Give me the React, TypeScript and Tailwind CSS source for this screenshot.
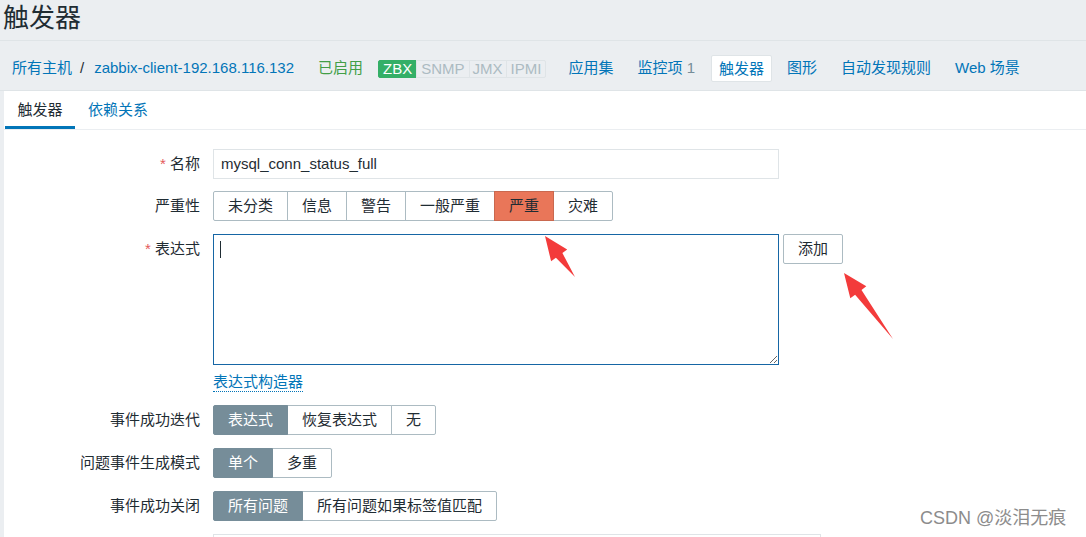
import React from "react";

function arrowPoints(tx: number, ty: number, ex: number, ey: number, h = 24, w = 10, s = 4) {
  const dx = ex - tx;
  const dy = ey - ty;
  const len = Math.sqrt(dx * dx + dy * dy);
  const ux = dx / len;
  const uy = dy / len;
  const nx = uy;
  const ny = -ux;
  const bx = tx + ux * h;
  const by = ty + uy * h;
  const pts = [
    [tx, ty],
    [bx + nx * w, by + ny * w],
    [bx + nx * s, by + ny * s],
    [ex, ey],
    [bx - nx * s, by - ny * s],
    [bx - nx * w, by - ny * w],
  ];
  return pts.map((p) => `${p[0].toFixed(1)},${p[1].toFixed(1)}`).join(" ");
}

type Opt = { label: string; selected?: boolean; color?: "sev" | "gray" };

function Segmented({ options }: { options: Opt[] }) {
  return (
    <div className="flex h-[30px]">
      {options.map((o, i) => {
        const first = i === 0;
        const last = i === options.length - 1;
        let cls =
          "h-[30px] px-[14px] leading-[28px] border whitespace-nowrap " +
          (first ? "rounded-l-[2px] " : "-ml-px ") +
          (last ? "rounded-r-[2px] " : "");
        if (o.selected && o.color === "sev") {
          cls += "bg-[#e97659] border-[#c9684f] text-[#1f2c33] relative z-10";
        } else if (o.selected) {
          cls += "bg-[#768d99] border-[#768d99] text-white relative z-10";
        } else {
          cls += "bg-white border-[#acbbc2] text-[#1f2c33]";
        }
        return (
          <div key={o.label} className={cls}>
            {o.label}
          </div>
        );
      })}
    </div>
  );
}

function Row({
  label,
  required,
  children,
  className,
}: {
  label: string;
  required?: boolean;
  children: React.ReactNode;
  className?: string;
}) {
  return (
    <div className={"flex items-start " + (className ?? "")}>
      <div className="w-[196px] h-[30px] leading-[30px] text-right whitespace-nowrap">
        {required && <span className="text-[#e45959]">* </span>}
        {label}
      </div>
      <div className="ml-[13px]">{children}</div>
    </div>
  );
}

export default function App() {
  return (
    <div className="relative w-[1086px] h-[537px] overflow-hidden bg-[#ebeef1] text-[#1f2c33] text-[15px] font-['Liberation_Sans','Noto_Sans_CJK_SC',sans-serif]">
      {/* Title */}
      <div className="h-[41px] border-b border-[#dfe4e7] pl-[3px]">
        <h1 className="text-[26px] leading-[36px] font-normal">触发器</h1>
      </div>

      {/* Host navigation */}
      <div className="flex items-center h-[50px] pt-[6px] border-b border-[#dfe4e7] pl-[12px] text-[#0275b8] whitespace-nowrap">
        <span>所有主机</span>
        <span className="ml-[8px] mr-[10px] text-[#1f2c33]">/</span>
        <span>zabbix-client-192.168.116.132</span>
        <span className="ml-[24px] text-[#429e47]">已启用</span>
        <div className="ml-[15px] flex h-[18px] text-[15px] leading-[16px]">
          <span className="px-[4px] bg-[#34af67] border border-[#34af67] text-white rounded-l-[2px]">ZBX</span>
          <span className="px-[4px] bg-[#ebeef1] border border-[#dfe4e7] -ml-px text-[#acbbc2]">SNMP</span>
          <span className="px-[3px] bg-[#ebeef1] border border-[#dfe4e7] -ml-px text-[#acbbc2]">JMX</span>
          <span className="px-[4px] bg-[#ebeef1] border border-[#dfe4e7] -ml-px text-[#acbbc2] rounded-r-[2px]">IPMI</span>
        </div>
        <span className="ml-[22px]">应用集</span>
        <span className="ml-[24px]">
          监控项 <span className="text-[#768d99]">1</span>
        </span>
        <span className="ml-[16px] h-[27px] leading-[25px] px-[7px] bg-white border border-[#dfe4e7] rounded-[2px]">
          触发器
        </span>
        <span className="ml-[15px]">图形</span>
        <span className="ml-[24px]">自动发现规则</span>
        <span className="ml-[24px]">Web 场景</span>
      </div>

      {/* Main panel */}
      <div className="ml-[4px] bg-white h-[446px]">
        {/* Tabs */}
        <div className="flex h-[39px] border-b border-[#ebeef1]">
          <div className="ml-[1px] w-[70px] h-[38px] pt-[4px] border-b-[3px] border-[#0275b8] flex items-center justify-center">
            触发器
          </div>
          <div className="h-[38px] pt-[4px] pb-[3px] px-[13px] flex items-center text-[#0275b8]">依赖关系</div>
        </div>

        {/* Form */}
        <div className="pt-[19px]">
          <Row label="名称" required>
            <div className="w-[566px] h-[30px] border border-[#dfe4e7] px-[7px] leading-[28px]">
              mysql_conn_status_full
            </div>
          </Row>

          <Row label="严重性" className="mt-[12px]">
            <Segmented
              options={[
                { label: "未分类" },
                { label: "信息" },
                { label: "警告" },
                { label: "一般严重" },
                { label: "严重", selected: true, color: "sev" },
                { label: "灾难" },
              ]}
            />
          </Row>

          <Row label="表达式" required className="mt-[13px]">
            <div className="flex items-start">
              <div className="relative">
                <textarea
                  className="block w-[566px] h-[131px] border border-[#1666a5] bg-white outline-none"
                  defaultValue=""
                />
                <div className="absolute left-[7px] top-[7px] w-px h-[17px] bg-[#1f2c33]" />
              </div>
              <div className="ml-[4px] w-[60px] h-[30px] leading-[28px] text-center border border-[#acbbc2] rounded-[2px] bg-white">
                添加
              </div>
            </div>
            <div className="mt-[8px] flex h-[19px]">
              <span className="block h-[19px] leading-[18px] text-[#0275b8] border-b border-dotted border-[#0275b8]">
                表达式构造器
              </span>
            </div>
          </Row>

          <Row label="事件成功迭代" className="mt-[13px]">
            <Segmented
              options={[{ label: "表达式", selected: true }, { label: "恢复表达式" }, { label: "无" }]}
            />
          </Row>

          <Row label="问题事件生成模式" className="mt-[13px]">
            <Segmented options={[{ label: "单个", selected: true }, { label: "多重" }]} />
          </Row>

          <Row label="事件成功关闭" className="mt-[13px]">
            <Segmented
              options={[{ label: "所有问题", selected: true }, { label: "所有问题如果标签值匹配" }]}
            />
          </Row>

          <div className="flex mt-[13px]">
            <div className="w-[196px]" />
            <div className="ml-[13px] w-[608px] h-[30px] border border-[#dfe4e7]" />
          </div>
        </div>
      </div>

      {/* Annotation arrows */}
      <svg className="absolute inset-0 pointer-events-none" width="1086" height="537">
        <polygon points={arrowPoints(545, 236, 575, 277)} fill="#f33b3b" />
        <polygon points={arrowPoints(844, 273, 893, 339)} fill="#f33b3b" />
      </svg>

      {/* Watermark */}
      <div className="absolute left-[920px] top-[507px] text-[18px] leading-[22px] text-[#8c8c8c] whitespace-nowrap">
        CSDN @淡泪无痕
      </div>
    </div>
  );
}
